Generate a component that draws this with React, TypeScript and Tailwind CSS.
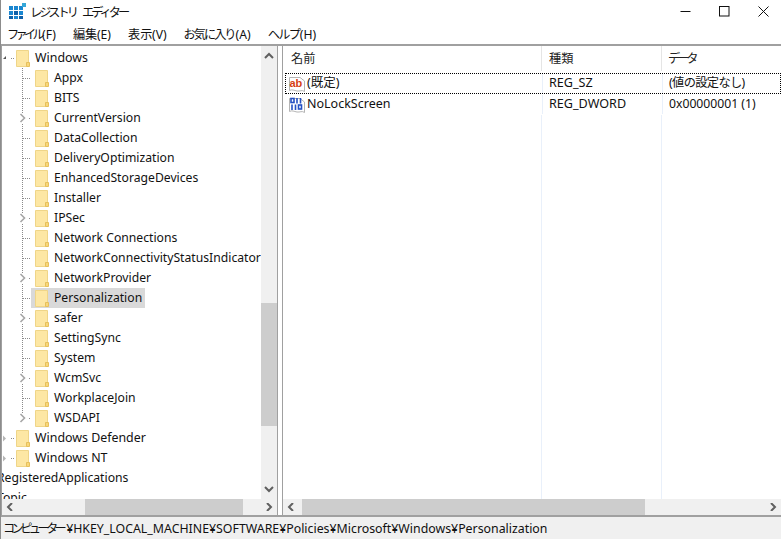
import React from 'react';

const font = { fontFamily: '"Noto Sans", "Noto Sans CJK JP", sans-serif' };

interface TreeItem {
  name: string;
  expandable?: boolean;
  selected?: boolean;
}

const children: TreeItem[] = [
  { name: 'Appx' },
  { name: 'BITS' },
  { name: 'CurrentVersion', expandable: true },
  { name: 'DataCollection' },
  { name: 'DeliveryOptimization' },
  { name: 'EnhancedStorageDevices' },
  { name: 'Installer' },
  { name: 'IPSec', expandable: true },
  { name: 'Network Connections' },
  { name: 'NetworkConnectivityStatusIndicator' },
  { name: 'NetworkProvider', expandable: true },
  { name: 'Personalization', selected: true },
  { name: 'safer', expandable: true },
  { name: 'SettingSync' },
  { name: 'System' },
  { name: 'WcmSvc', expandable: true },
  { name: 'WorkplaceJoin' },
  { name: 'WSDAPI', expandable: true },
];

// kana in the original UI font is much narrower than Noto's, hence the tracking per label
const menus = [
  { label: 'ファイル', key: '(F)', cls: 'tracking-[-3.7px] w-[35px]' },
  { label: '編集', key: '(E)', cls: 'tracking-[0px] w-[24px]' },
  { label: '表示', key: '(V)', cls: 'tracking-[0px] w-[24px]' },
  { label: 'お気に入り', key: '(A)', cls: 'tracking-[-2px] w-[52px]' },
  { label: 'ヘルプ', key: '(H)', cls: 'tracking-[-1.7px] w-[32px]' },
];

function Folder() {
  return (
    <svg width="14" height="17" viewBox="0 0 14 17" className="shrink-0">
      <path d="M0.5 0.5H12.5V16.5H0.5Z" fill="#fde7a4" stroke="#efd588" />
      <path d="M10.5 16.5V12.5H13.5V16.5Z" fill="#f9d779" stroke="#e6c05c" />
    </svg>
  );
}

function ChevronClosed() {
  return (
    <svg width="8" height="10" viewBox="0 0 8 10">
      <path d="M1.5 1L5.5 5L1.5 9" fill="none" stroke="#a6a6a6" strokeWidth="1.6" />
    </svg>
  );
}

function ArrowIcon({ dir }: { dir: 'up' | 'down' | 'left' | 'right' }) {
  const paths = {
    up: 'M1 6L5 2L9 6',
    down: 'M1 2L5 6L9 2',
    left: 'M6 0L2 4L6 8',
    right: 'M2 0L6 4L2 8',
  };
  const vertical = dir === 'up' || dir === 'down';
  return (
    <svg width={vertical ? 10 : 8} height={8} viewBox={vertical ? '0 0 10 8' : '0 0 8 8'}>
      <path d={paths[dir]} fill="none" stroke="#606060" strokeWidth="2" />
    </svg>
  );
}

// dotted connector lines beside a child node
function TreeRow({ item, last }: { item: TreeItem; last: boolean }) {
  return (
    <div className="flex h-5 items-center">
      <div className="relative h-5 w-[29px] shrink-0">
        <svg width="29" height="20" className="absolute left-0 top-0">
          <path
            d={last ? 'M20.5 0V10' : 'M20.5 0V20'}
            stroke="#8a8a8a"
            strokeDasharray="1 1"
            fill="none"
          />
          <path
            d={item.expandable ? 'M27 10.5H29' : 'M21 10.5H29'}
            stroke="#8a8a8a"
            strokeDasharray="1 1"
            fill="none"
          />
        </svg>
        {item.expandable && (
          <span className="absolute left-[17px] top-[5px] flex bg-white">
            <ChevronClosed />
          </span>
        )}
      </div>
      <div className={`flex h-5 items-center pl-[4px] ${item.selected ? 'bg-[#d9d9d9]' : ''}`}>
        <Folder />
        <span className="ml-[5px] whitespace-nowrap pr-[3px] text-[12.2px] leading-5 text-[#111]">{item.name}</span>
      </div>
    </div>
  );
}

function TopRow({ name, open }: { name: string; open?: boolean }) {
  return (
    <div className="flex h-5 items-center">
      <div className="relative h-5 w-[14px] shrink-0">
        <svg width="14" height="20" className="absolute left-0 top-0">
          {open ? (
            <path d="M1 11L4 8V11Z" fill="#555" />
          ) : (
            <path d="M1 7.5L4 10.5L1 13.5Z" fill="#b5b5b5" />
          )}
          <path d="M9 10.5H13" stroke="#8a8a8a" strokeDasharray="1 1" fill="none" />
        </svg>
      </div>
      <Folder />
      <span className="ml-[5px] text-[12.4px] leading-5 text-[#111]">{name}</span>
    </div>
  );
}

function StringIcon() {
  return (
    <svg width="16" height="16" viewBox="0 0 16 16" className="shrink-0">
      <path
        d="M0.5 1.5H11L15.5 5V15.5C13 13.5 11 15.5 8 15C5 14.5 3 13 0.5 14.5Z"
        fill="#fff"
        stroke="#b4b4b4"
      />
      <text x="0.5" y="10.5" fontSize="11" fontWeight="700" fill="#d63f14" fontFamily="Liberation Sans, sans-serif">
        ab
      </text>
    </svg>
  );
}

function BinaryIcon() {
  return (
    <svg width="16" height="16" viewBox="0 0 16 16" className="shrink-0">
      <path
        d="M0.5 1.5H11L15.5 5V15.5C13 13.5 11 15.5 8 15C5 14.5 3 13 0.5 14.5Z"
        fill="#fff"
        stroke="#b4b4b4"
      />
      <g fill="none" stroke="#2450c4" strokeWidth="1.6">
        <rect x="2" y="1.5" width="3" height="4" />
        <path d="M8 1V6.5M11.5 1V6.5" />
        <path d="M3 7.5V13M6.5 7.5V13" />
        <rect x="9.5" y="8" width="3" height="4" />
      </g>
    </svg>
  );
}

function HScroll({ thumb }: { thumb: string }) {
  return (
    <div className="flex h-[16px] shrink-0 items-center bg-[#f0f0f0]">
      <div className="flex h-full w-[16px] shrink-0 items-center justify-center">
        <ArrowIcon dir="left" />
      </div>
      <div className="flex h-full flex-1">
        <div className={`h-full bg-[#cdcdcd] ${thumb}`} />
      </div>
      <div className="flex h-full w-[16px] shrink-0 items-center justify-center">
        <ArrowIcon dir="right" />
      </div>
    </div>
  );
}

function ValueRow({
  icon,
  name,
  type,
  data,
  focused,
  dataCls,
}: {
  icon: React.ReactNode;
  name: string;
  type: string;
  data: string;
  focused?: boolean;
  dataCls?: string;
}) {
  return (
    <div
      className={`flex h-[21px] items-center border border-dotted ${
        focused ? 'border-black' : 'border-transparent'
      }`}
    >
      <div className="flex h-full w-[256px] shrink-0 items-center gap-[2px] pl-[3px] text-[12.5px] text-[#111]">
        {icon}
        <span>{name}</span>
      </div>
      <div className="flex h-full w-[120px] shrink-0 items-center border-l border-[#e9f0fa] pl-[6px] text-[12.6px]">{type}</div>
      <div className={`flex h-full flex-1 items-center border-l border-[#e9f0fa] pl-[6px] ${dataCls ?? ''}`}>{data}</div>
    </div>
  );
}

export default function App() {
  return (
    <div
      className="flex h-[539px] w-[781px] flex-col overflow-hidden border-l border-[#8c8c8c] bg-white text-[12.2px] text-[#111]"
      style={font}
    >
      {/* Title bar */}
      <div className="flex h-[24px] shrink-0 items-center">
        <svg width="17" height="16" viewBox="0 0 17 16" className="ml-[8px] mb-[2px] shrink-0">
          <g fill="#1a86d0">
            <rect x="0" y="3" width="4" height="4" />
            <rect x="5" y="3" width="4" height="4" />
            <rect x="10" y="3" width="4" height="4" />
            <rect x="0" y="8" width="4" height="4" />
            <rect x="5" y="8" width="4" height="4" fill="#0f5fa8" />
            <rect x="10" y="8" width="4" height="4" />
            <rect x="0" y="13" width="4" height="3" fill="#0f5fa8" />
            <rect x="5" y="13" width="4" height="3" />
            <rect x="10" y="13" width="4" height="3" fill="#0f5fa8" />
          </g>
          <rect x="13" y="0" width="4" height="4" fill="#35a7d8" />
        </svg>
        <span className="ml-[4px] mt-[2px] w-[52px] whitespace-nowrap tracking-[-3px]">レジストリ</span>
        <span className="mt-[2px] whitespace-nowrap tracking-[-3px]">エディター</span>
        <div className="mb-[2px] ml-auto flex items-center">
          <div className="flex w-[40px] justify-center pr-[2px]">
            <svg width="11" height="11" viewBox="0 0 11 11">
              <path d="M0.5 5.5H10.5" stroke="#111" />
            </svg>
          </div>
          <div className="flex w-[40px] justify-center pr-[4px]">
            <svg width="11" height="11" viewBox="0 0 11 11">
              <rect x="0.5" y="0.5" width="9.5" height="9.5" fill="none" stroke="#111" />
            </svg>
          </div>
          <div className="flex w-[35px] justify-center">
            <svg width="11" height="11" viewBox="0 0 11 11">
              <path d="M0.5 0.5L10.5 10.5M10.5 0.5L0.5 10.5" stroke="#111" />
            </svg>
          </div>
        </div>
      </div>

      {/* Menu bar */}
      <div className="flex h-[20px] shrink-0 items-center gap-[17px] pl-[6px] pt-[2px]">
        {menus.map((m) => (
          <span key={m.label} className="flex whitespace-nowrap">
            <span className={m.cls}>{m.label}</span>
            <span>{m.key}</span>
          </span>
        ))}
      </div>

      {/* Panes */}
      <div className="flex min-h-0 flex-1 border-t-2 border-[#a0a0a0] bg-[#f0f0f0]">
        {/* Tree pane */}
        <div className="flex w-[277px] shrink-0 flex-col border-x border-[#a0a0a0]">
          <div className="flex min-h-0 flex-1">
            <div className="min-w-0 flex-1 overflow-hidden bg-white pt-[2px]">
              <TopRow name="Windows" open />
              {children.map((c, i) => (
                <TreeRow key={c.name} item={c} last={i === children.length - 1} />
              ))}
              <TopRow name="Windows Defender" />
              <TopRow name="Windows NT" />
              <div className="ml-[-5px] h-5 whitespace-nowrap leading-5">RegisteredApplications</div>
              <div className="ml-[-5px] h-5 whitespace-nowrap leading-5">Topic</div>
            </div>
            {/* Vertical scrollbar */}
            <div className="flex w-[16px] shrink-0 flex-col bg-[#f0f0f0]">
              <div className="flex h-[20px] shrink-0 items-center justify-center">
                <ArrowIcon dir="up" />
              </div>
              <div className="flex-1 pt-[237px]">
                <div className="h-[123px] bg-[#cdcdcd]" />
              </div>
              <div className="flex h-[20px] shrink-0 items-center justify-center">
                <ArrowIcon dir="down" />
              </div>
            </div>
          </div>
          <HScroll thumb="ml-[67px] w-[158px]" />
        </div>

        <div className="w-[4px] shrink-0 bg-white" />

        {/* Values pane */}
        <div className="flex min-w-0 flex-1 flex-col border-l border-[#a0a0a0]">
          <div className="flex min-h-0 flex-1 flex-col bg-white">
            <div className="flex h-[25px] shrink-0 items-center text-[#222]">
              <div className="flex h-full w-[259px] shrink-0 items-center border-r border-[#e5e5e5] pl-[8px] pt-[2px]">名前</div>
              <div className="flex h-full w-[120px] shrink-0 items-center border-r border-[#e5e5e5] pl-[7px] pt-[2px]">種類</div>
              <div className="flex h-full flex-1 items-center pl-[6px] pt-[2px] tracking-[-3px]">データ</div>
            </div>
            <div className="ml-[2px] mt-[2px] flex flex-col">
              <ValueRow
                icon={<StringIcon />}
                name="(既定)"
                type="REG_SZ"
                data="(値の設定なし)"
                dataCls="tracking-[-0.6px]"
                focused
              />
              <ValueRow icon={<BinaryIcon />} name="NoLockScreen" type="REG_DWORD" data="0x00000001 (1)" />
            </div>
            <div className="flex min-h-0 flex-1">
              <div className="w-[259px] shrink-0 border-r border-[#e9f0fa]" />
              <div className="w-[120px] shrink-0 border-r border-[#e9f0fa]" />
            </div>
          </div>
          <HScroll thumb="ml-[3px] w-[343px]" />
        </div>
      </div>

      {/* Status bar */}
      <div className="flex h-[24px] shrink-0 items-center whitespace-nowrap border-t-2 border-[#a0a0a0] bg-[#f0f0f0] pl-[2px] pt-[2px]">
        <span className="tracking-[-3.6px]">コンピューター</span>
        <span className="ml-[3px] text-[12.35px]">¥HKEY_LOCAL_MACHINE¥SOFTWARE¥Policies¥Microsoft¥Windows¥Personalization</span>
      </div>
    </div>
  );
}
